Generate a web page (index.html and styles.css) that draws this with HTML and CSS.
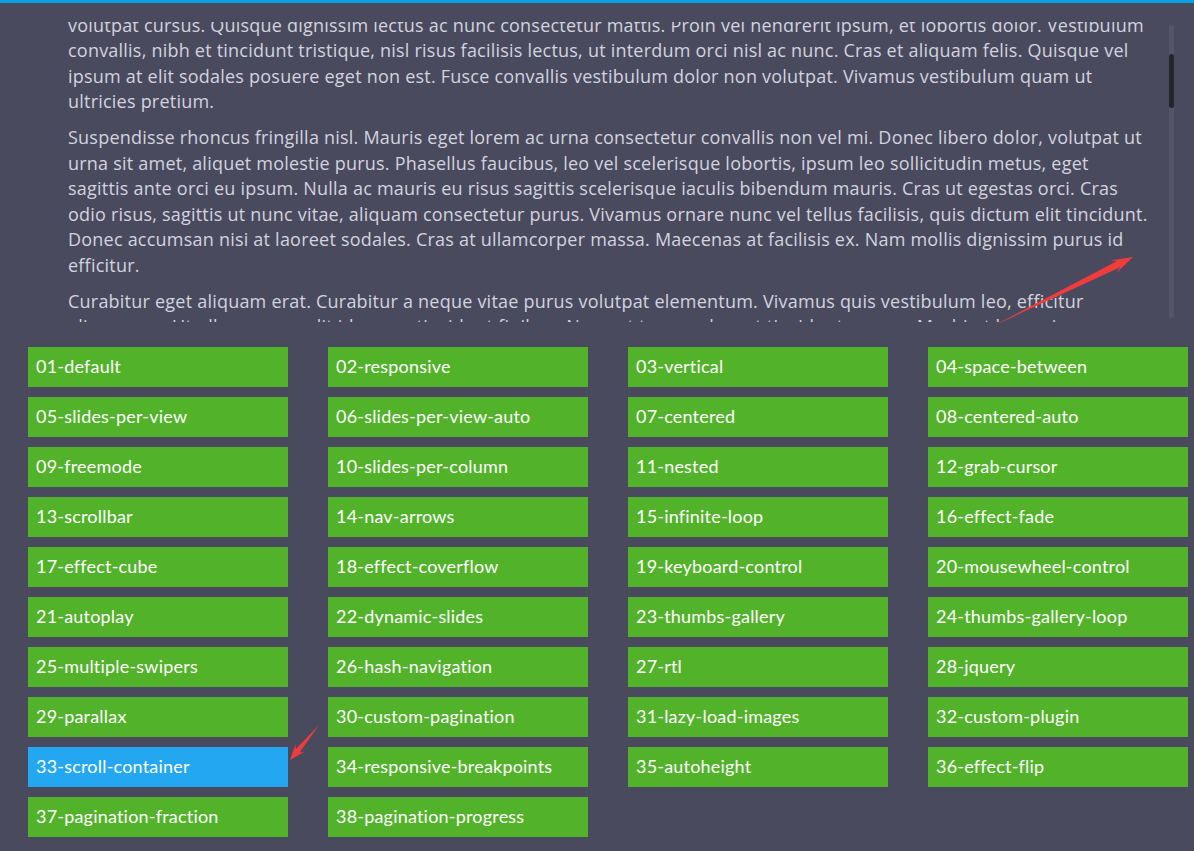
FILE: index.html
```html
<!DOCTYPE html>
<html lang="en">
<head>
<meta charset="utf-8">
<title>Swiper demos</title>
<link rel="stylesheet" href="styles.css">
</head>
<body>
<div class="reader">
  <div class="reader-content">
    <p>Lorem ipsum dolor sit amet, consectetur adipiscing elit. Nulla a risus et massa euismod posuere eu a elit. Donec ut<br>
    sollicitudin neque, quis maximus nunc. Praesent gravida ligula vel ex pharetra, id faucibus ante tristique. Nulla facilisi. Nunc<br>
    volutpat cursus. Quisque dignissim lectus ac nunc consectetur mattis. Proin vel hendrerit ipsum, et lobortis dolor. Vestibulum<br>
    convallis, nibh et tincidunt tristique, nisl risus facilisis lectus, ut interdum orci nisl ac nunc. Cras et aliquam felis. Quisque vel<br>
    ipsum at elit sodales posuere eget non est. Fusce convallis vestibulum dolor non volutpat. Vivamus vestibulum quam ut<br>
    ultricies pretium.</p>
    <p>Suspendisse rhoncus fringilla nisl. Mauris eget lorem ac urna consectetur convallis non vel mi. Donec libero dolor, volutpat ut<br>
    urna sit amet, aliquet molestie purus. Phasellus faucibus, leo vel scelerisque lobortis, ipsum leo sollicitudin metus, eget<br>
    sagittis ante orci eu ipsum. Nulla ac mauris eu risus sagittis scelerisque iaculis bibendum mauris. Cras ut egestas orci. Cras<br>
    odio risus, sagittis ut nunc vitae, aliquam consectetur purus. Vivamus ornare nunc vel tellus facilisis, quis dictum elit tincidunt.<br>
    Donec accumsan nisi at laoreet sodales. Cras at ullamcorper massa. Maecenas at facilisis ex. Nam mollis dignissim purus id<br>
    efficitur.</p>
    <p>Curabitur eget aliquam erat. Curabitur a neque vitae purus volutpat elementum. Vivamus quis vestibulum leo, efficitur<br>
    aliquam ex. Ut ullamcorper elit id augue tincidunt finibus. Nunc ut tempus leo, at tincidunt magna. Morbi ut lacus risus.</p>
  </div>
  <div class="scrollbar"><div class="thumb"></div></div>
</div>

<div class="demos">
  <a class="demo">01-default</a>
  <a class="demo">02-responsive</a>
  <a class="demo">03-vertical</a>
  <a class="demo">04-space-between</a>
  <a class="demo">05-slides-per-view</a>
  <a class="demo">06-slides-per-view-auto</a>
  <a class="demo">07-centered</a>
  <a class="demo">08-centered-auto</a>
  <a class="demo">09-freemode</a>
  <a class="demo">10-slides-per-column</a>
  <a class="demo">11-nested</a>
  <a class="demo">12-grab-cursor</a>
  <a class="demo">13-scrollbar</a>
  <a class="demo">14-nav-arrows</a>
  <a class="demo">15-infinite-loop</a>
  <a class="demo">16-effect-fade</a>
  <a class="demo">17-effect-cube</a>
  <a class="demo">18-effect-coverflow</a>
  <a class="demo">19-keyboard-control</a>
  <a class="demo">20-mousewheel-control</a>
  <a class="demo">21-autoplay</a>
  <a class="demo">22-dynamic-slides</a>
  <a class="demo">23-thumbs-gallery</a>
  <a class="demo">24-thumbs-gallery-loop</a>
  <a class="demo">25-multiple-swipers</a>
  <a class="demo">26-hash-navigation</a>
  <a class="demo">27-rtl</a>
  <a class="demo">28-jquery</a>
  <a class="demo">29-parallax</a>
  <a class="demo">30-custom-pagination</a>
  <a class="demo">31-lazy-load-images</a>
  <a class="demo">32-custom-plugin</a>
  <a class="demo active">33-scroll-container</a>
  <a class="demo">34-responsive-breakpoints</a>
  <a class="demo">35-autoheight</a>
  <a class="demo">36-effect-flip</a>
  <a class="demo">37-pagination-fraction</a>
  <a class="demo">38-pagination-progress</a>
</div>

<svg class="annotations" width="1194" height="851" viewBox="0 0 1194 851">
  <polygon fill="#f23b3b" points="993,326 1120.2,267.2 1116.4,273.0 1133,257 1110.2,260.4 1117.1,260.9"/>
  <polygon fill="#f23b3b" points="319,725 299.5,752.4 304.8,751.5 290,760 295.6,743.9 295.7,749.2"/>
</svg>
</body>
</html>
```
FILE: styles.css
```css
* { box-sizing: border-box; }

html, body {
  margin: 0;
  padding: 0;
}

body {
  position: relative;
  min-height: 851px;
  background: #4a4a5e;
  border-top: 3px solid #0aa0e6;
  font-family: Lato, "Open Sans", sans-serif;
  overflow: hidden;
}

.reader {
  position: relative;
  margin-top: 19px;
  height: 300px;
  overflow: hidden;
  padding-left: 68px;
}

.reader-content {
  margin-top: -60.5px;
  color: #d3d3df;
  font-family: "Open Sans", Lato, sans-serif;
  font-size: 18px;
  letter-spacing: 0.22px;
  line-height: 25.6px;
  white-space: nowrap;
}

.reader-content p {
  margin: 0 0 10px;
}

.scrollbar {
  position: absolute;
  top: 3px;
  bottom: 4px;
  right: 20px;
  width: 5px;
  border-radius: 3px;
  background: #54546a;
}

.thumb {
  margin-top: 29px;
  height: 54px;
  border-radius: 3px;
  background: #25252e;
}

.demos {
  display: grid;
  grid-template-columns: repeat(4, 260px);
  column-gap: 40px;
  row-gap: 10px;
  padding: 25px 0 0 28px;
}

.demo {
  display: block;
  height: 40px;
  line-height: 38px;
  padding-left: 8px;
  background: #52b32a;
  color: #ffffff;
  font-size: 18px;
  letter-spacing: 0.2px;
  white-space: nowrap;
}

.demo.active {
  background: #22a7f0;
}

.annotations {
  position: absolute;
  left: 0;
  top: -3px;
  pointer-events: none;
}
```
